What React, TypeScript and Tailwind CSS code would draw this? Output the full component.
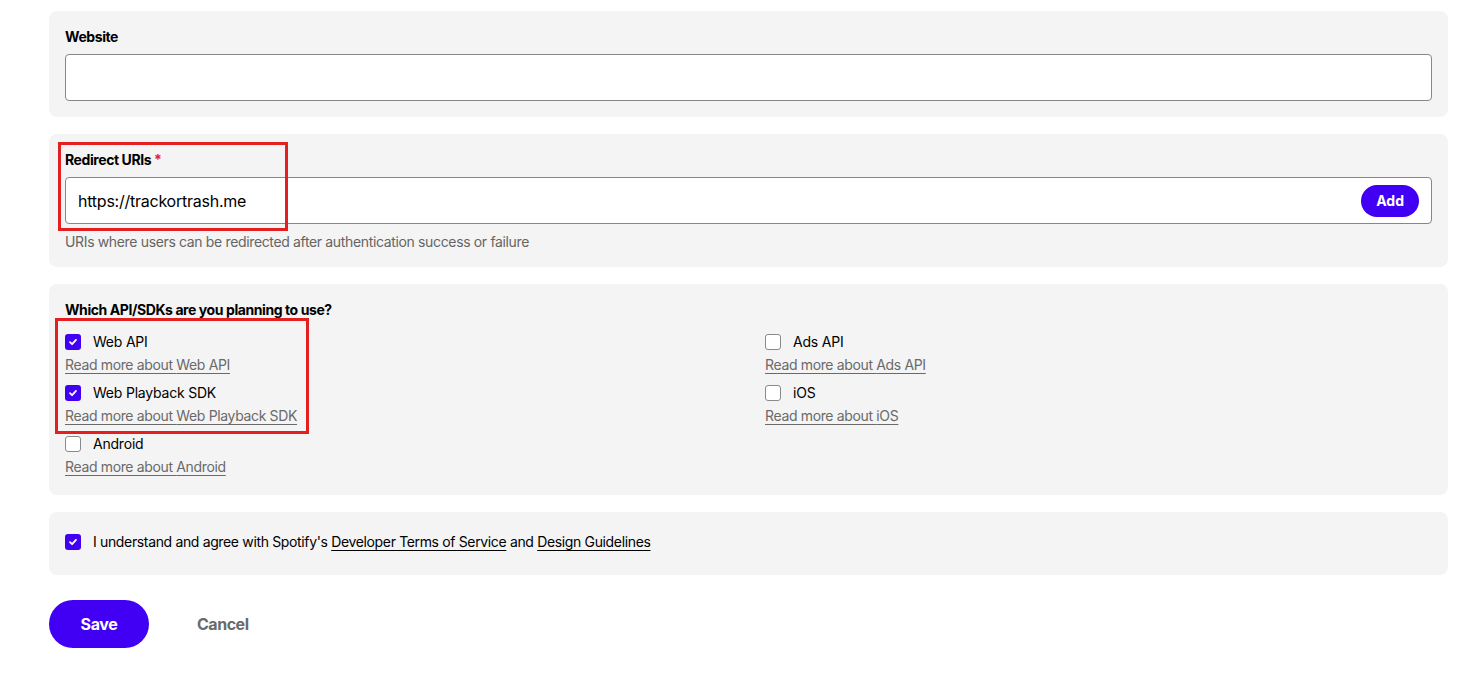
import { useState } from 'react';

const font = { fontFamily: 'Inter, "Noto Sans", sans-serif' };

type Sdk = { name: string; checked: boolean };

const leftSdks: Sdk[] = [
  { name: 'Web API', checked: true },
  { name: 'Web Playback SDK', checked: true },
  { name: 'Android', checked: false },
];

const rightSdks: Sdk[] = [
  { name: 'Ads API', checked: false },
  { name: 'iOS', checked: false },
];

function Checkbox({ checked }: { checked: boolean }) {
  if (checked) {
    return (
      <span className="flex h-4 w-4 shrink-0 items-center justify-center rounded-[3px] bg-[#4100f4]">
        <svg width="10" height="10" viewBox="0 0 10 10" fill="none">
          <path d="M2 5.2 4.1 7.2 8 2.9" stroke="white" strokeWidth="1.8" strokeLinecap="round" strokeLinejoin="round" />
        </svg>
      </span>
    );
  }
  return <span className="h-4 w-4 shrink-0 rounded-[3px] border border-[#8a8a8a] bg-white" />;
}

function SdkItem({ sdk }: { sdk: Sdk }) {
  return (
    <div className="mb-[6px] flex flex-col">
      <label className="flex h-6 items-center gap-3 text-sm tracking-[-0.015em] text-black">
        <Checkbox checked={sdk.checked} />
        {sdk.name}
      </label>
      <a className="mt-px h-5 self-start text-sm leading-5 tracking-[-0.025em] text-[#6a6a6a] underline underline-offset-[3px]" href="#">
        Read more about {sdk.name}
      </a>
    </div>
  );
}

export default function App() {
  const [uri, setUri] = useState('https://trackortrash.me');

  return (
    <div className="min-h-screen bg-white pl-[49px] pr-[29px] pt-[11px]" style={font}>
      <div className="flex flex-col gap-[17px]">
        {/* Website */}
        <section className="rounded-lg bg-[#f4f4f4] px-4 pb-4 pt-4">
          <p className="text-sm font-bold leading-5 tracking-[-0.03em] text-black">Website</p>
          <input className="mt-[7px] block h-[47px] w-full rounded-[4px] border border-[#878787] bg-white px-3 text-base outline-none" />
        </section>

        {/* Redirect URIs */}
        <section className="relative rounded-lg bg-[#f4f4f4] px-4 pb-4 pt-4">
          <p className="text-sm font-bold leading-5 tracking-[-0.03em] text-black">
            Redirect URIs <span className="text-[#e22134]">*</span>
          </p>
          <div className="mt-[7px] flex h-[47px] items-center rounded-[4px] border border-[#878787] bg-white pl-3 pr-3">
            <input
              value={uri}
              onChange={(e) => setUri(e.target.value)}
              className="flex-1 bg-transparent text-base tracking-[-0.015em] text-black outline-none"
            />
            <button className="h-8 rounded-full bg-[#4100f4] px-[15px] text-sm font-bold text-white">Add</button>
          </div>
          <p className="mt-[9px] text-sm leading-[18px] tracking-[-0.025em] text-[#656565]">
            URIs where users can be redirected after authentication success or failure
          </p>
          <div className="pointer-events-none absolute left-[9px] top-[8px] h-[89px] w-[230px] border-[3px] border-[#e3201f]" />
        </section>

        {/* APIs / SDKs */}
        <section className="relative rounded-lg bg-[#f4f4f4] px-4 pb-3 pt-4">
          <p className="text-sm font-bold leading-5 tracking-[-0.03em] text-black">Which API/SDKs are you planning to use?</p>
          <div className="mt-[10px] grid grid-cols-[700px_1fr]">
            <div>
              {leftSdks.map((s) => (
                <SdkItem key={s.name} sdk={s} />
              ))}
            </div>
            <div>
              {rightSdks.map((s) => (
                <SdkItem key={s.name} sdk={s} />
              ))}
            </div>
          </div>
          <div className="pointer-events-none absolute left-[6px] top-[34px] h-[116px] w-[254px] border-[3px] border-[#e3201f]" />
        </section>

        {/* Terms */}
        <section className="flex h-[63px] items-center gap-3 rounded-lg bg-[#f4f4f4] px-4 pb-[3px]">
          <Checkbox checked />
          <p className="text-sm tracking-[-0.025em] text-black">
            I understand and agree with Spotify's{' '}
            <a href="#" className="underline underline-offset-[3px]">Developer Terms of Service</a> and{' '}
            <a href="#" className="underline underline-offset-[3px]">Design Guidelines</a>
          </p>
        </section>
      </div>

      <div className="mt-[25px] flex items-center gap-4">
        <button className="h-12 w-[100px] rounded-full bg-[#4100f4] text-base font-bold tracking-[-0.02em] text-white">Save</button>
        <button className="h-12 px-8 text-base font-bold tracking-[-0.03em] text-[#6a6a6a]">Cancel</button>
      </div>
    </div>
  );
}
